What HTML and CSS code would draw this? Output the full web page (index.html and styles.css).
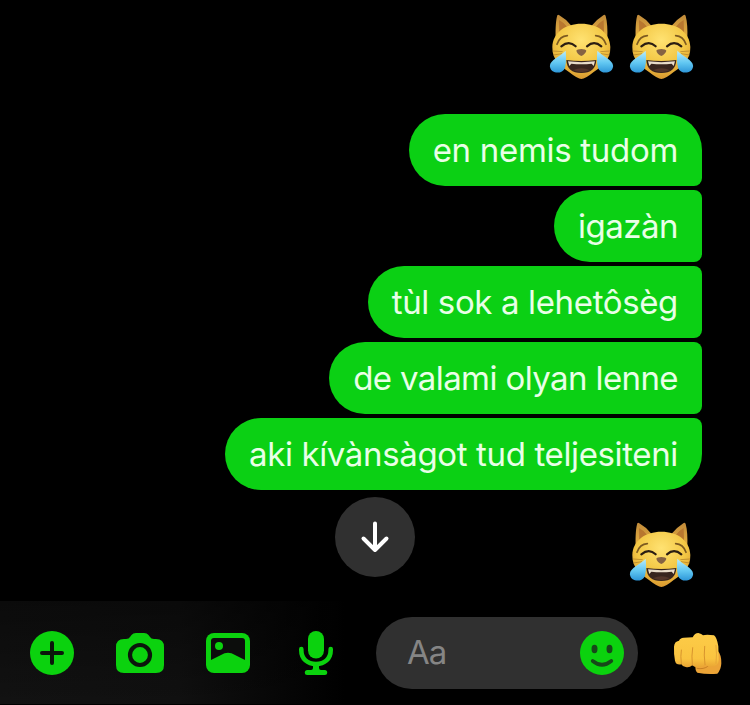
FILE: index.html
```
<!DOCTYPE html>
<html lang="hu">
<head>
<meta charset="utf-8">
<title>Chat</title>
<link rel="stylesheet" href="styles.css">
</head>
<body>
<svg class="defs" width="0" height="0" aria-hidden="true">
  <defs>
    <radialGradient id="fur" cx=".5" cy=".3" r=".7"><stop offset="0" stop-color="#ffe272"/><stop offset=".6" stop-color="#f3c744"/><stop offset="1" stop-color="#d9982f"/></radialGradient>
    <linearGradient id="ear" x1="0" y1="0" x2="0" y2="1"><stop offset="0" stop-color="#c08a3a"/><stop offset="1" stop-color="#e6b040"/></linearGradient>
    <linearGradient id="tear" x1="0" y1="0" x2="0" y2="1"><stop offset="0" stop-color="#b9ecfb"/><stop offset=".55" stop-color="#62c8f2"/><stop offset="1" stop-color="#2d96d8"/></linearGradient>
    <linearGradient id="hand" x1="0" y1="0" x2="0" y2="1"><stop offset="0" stop-color="#fdcc48"/><stop offset=".75" stop-color="#fac440"/><stop offset="1" stop-color="#e9a433"/></linearGradient>
    <symbol id="cat" viewBox="27 27 195 198">
      <path d="M47 98C46 69 48 43 52 31Q54 28 58 31Q79 43 94 62L155 62Q172 42 191 30Q195 28 197 33C202 51 203 75 202 98Z" fill="url(#ear)"/>
      <path d="M57 45Q72 53 81 65L58 84ZM191 45Q177 53 168 65L192 84Z" fill="#b8772f"/>
      <path d="M124 56C76 56 38 83 37 126C36 166 63 184 88 202Q113 222 124 222Q136 222 160 202C186 184 212 166 211 126C210 83 173 56 124 56Z" fill="url(#fur)"/>
      <path d="M39 138L68 140M40 150L66 146M210 138L181 140M209 150L183 146" fill="none" stroke="#a97a28" stroke-width="2"/>
      <path d="M51 118C56 103 66 93 82 92M198 118C193 103 183 93 167 92" fill="none" stroke="#7d5a20" stroke-width="5" stroke-linecap="round"/>
      <path d="M64 124Q87 105 107 124M141 124Q162 105 184 124" fill="none" stroke="#2b1d12" stroke-width="6.500" stroke-linecap="round"/>
      <path d="M109 137Q111 132 124 132Q137 132 139 137Q137 146 124 153Q111 147 109 137Z" fill="#866343"/>
      <path d="M79 165Q124 171 169 165Q167 204 124 204Q81 204 79 165Z" fill="#38251d"/>
      <path d="M84 169Q124 174 165 169L161 183L155 176Q124 179 94 176L88 183Z" fill="#e8dcc9"/>
      <path d="M99 196Q124 184 150 196Q124 207 99 196Z" fill="#523529"/>
      <path d="M77 137Q80 168 75 188C67 209 34 207 30 186C26 166 60 155 77 137ZM172 137Q169 168 174 188C182 209 215 207 219 186C223 166 189 155 172 137Z" fill="url(#tear)"/>
    </symbol>
  </defs>
</svg>
<main class="chat">
  <section class="thread">
    <div class="emoji-row"><svg class="cat" role="img" aria-label="😹"><use href="#cat"/></svg><svg class="cat" role="img" aria-label="😹"><use href="#cat"/></svg></div>
    <div class="messages">
      <p class="bubble first">en nemis tudom</p>
      <p class="bubble short">igazàn</p>
      <p class="bubble">tùl sok a lehetôsèg</p>
      <p class="bubble tight">de valami olyan lenne</p>
      <p class="bubble last">aki kívànsàgot tud teljesiteni</p>
    </div>
    <div class="emoji-row"><svg class="cat" role="img" aria-label="😹"><use href="#cat"/></svg></div>
    <button class="scroll-down" aria-label="↓"><svg width="80" height="80" viewBox="0 0 80 80"><path d="M40 26.500V53M28.500 41.500L40 53L51.500 41.500"/></svg></button>
  </section>
  <footer class="composer">
    <div class="actions">
      <svg width="44" height="44" viewBox="0 0 44 44"><circle cx="22" cy="22" r="22" fill="#0bd20e"/><path d="M22 12V32M12 22H32" stroke="#0b160b" stroke-width="4" stroke-linecap="round"/></svg>
      <svg width="48" height="40" viewBox="0 0 48 40"><path d="M8 6H10Q13 6 14 4L15.500 2Q17 0 20 0H28Q31 0 32.500 2L34 4Q35 6 38 6H40Q48 6 48 14V32Q48 40 40 40H8Q0 40 0 32V14Q0 6 8 6Z" fill="#0bd20e"/><circle cx="24" cy="22" r="10" fill="none" stroke="#0b160b" stroke-width="4.200"/></svg>
      <svg width="44" height="40" viewBox="0 0 44 40"><rect width="44" height="40" rx="8" fill="#0bd20e"/><path d="M8 5H36Q39 5 39 8V27L29 22Q22 17.500 15 22L5 27V8Q5 5 8 5Z" fill="#0c0d0c"/><circle cx="13" cy="13" r="4" fill="#0bd20e"/></svg>
      <svg width="34" height="44" viewBox="0 0 34 44"><rect x="9" width="16" height="27.500" rx="8" fill="#0bd20e"/><path d="M2.300 18V19C2.300 28 8.500 33 17 33S31.700 28 31.700 19V18" fill="none" stroke="#0bd20e" stroke-width="4.600" stroke-linecap="round"/><path d="M14 33H20V37Q20 39 22 39H12Q14 39 14 37Z" fill="#0bd20e"/><path d="M8.300 41.500H25.700" stroke="#0bd20e" stroke-width="5" stroke-linecap="round"/></svg>
    </div>
    <div class="field"><span class="placeholder">Aa</span>
      <svg width="44" height="44" viewBox="0 0 44 44"><circle cx="22" cy="22" r="22" fill="#0bd20e"/><ellipse cx="14.500" cy="18" rx="3" ry="4.200" fill="#174819"/><ellipse cx="29.500" cy="18" rx="3" ry="4.200" fill="#174819"/><path d="M12.700 30Q22 37.500 31.300 30" fill="none" stroke="#174819" stroke-width="3.700" stroke-linecap="round"/></svg>
    </div>
    <svg class="fist" viewBox="338 112 147 127" role="img" aria-label="👊">
      <path d="M405 207L470 165Q484 179 483 205Q482 225 471 236Q440 239 411 233Q404 228 405 207Z" fill="#eca437"/>
      <path d="M409 220Q430 224 444 213" fill="none" stroke="#c98023" stroke-width="3"/>
      <path d="M341 155Q342 139 356 137Q359 129 370 128L397 127Q403 114 414 114Q424 116 428 121Q438 117 461 121Q470 128 474 154L475 196Q474 214 456 215Q442 217 434 209Q425 217 412 217Q401 217 396 211Q387 219 376 216Q366 215 363 208Q347 211 344 197Q340 176 341 155Z" fill="url(#hand)"/>
      <path d="M363 206Q360 184 363 165M396 210Q393 183 397 158M434 209Q430 179 433 154" fill="none" stroke="#d8942d" stroke-width="3" stroke-linecap="round"/>
      <path d="M467 151Q470 177 467 205" fill="none" stroke="#e2a237" stroke-width="2.500" stroke-linecap="round"/>
    </svg>
  </footer>
</main>
</body>
</html>
```
FILE: styles.css
```
* { box-sizing: border-box; }
body { margin: 0; background: #000; font-family: Inter, "Liberation Sans", sans-serif; }
.defs { position: absolute; }
.chat { width: 750px; height: 705px; display: flex; flex-direction: column; overflow: hidden; background: #000; }
.thread { position: relative; height: 601px; padding: 14px 56px 0 0; }
.emoji-row { display: flex; justify-content: flex-end; gap: 15px; height: 66px; }
.cat { width: 65px; height: 66px; }
.messages { display: flex; flex-direction: column; align-items: flex-end; gap: 4px; margin: 34px -8px 32px 0; }
.bubble { margin: 0; height: 72px; padding: 0 24px; border-radius: 36px 8px 8px 36px; background: #0bd014; color: #e9ffe7; font-size: 33px; line-height: 73px; letter-spacing: -.36px; white-space: nowrap; }
.first { border-top-right-radius: 36px; letter-spacing: -.3px; }
.short { letter-spacing: -.5px; }
.tight { letter-spacing: -.6px; }
.last { border-bottom-right-radius: 36px; }
.scroll-down { position: absolute; left: 335px; top: 497px; width: 80px; height: 80px; padding: 0; border: 0; border-radius: 50%; background: #303030; }
.scroll-down svg { display: block; fill: none; stroke: #fff; stroke-width: 4; stroke-linecap: round; stroke-linejoin: round; }
.composer { height: 103px; display: flex; align-items: center; padding: 1px 28px 0 30px; background: linear-gradient(to bottom, rgba(0,0,0,.4), transparent), linear-gradient(to right, #121212 0, #101010 180px, #000 345px); }
.composer svg { flex: none; }
.actions { display: flex; align-items: center; gap: 42px; width: 346px; flex: none; }
.actions svg:last-child { margin-left: 7px; }
.field { flex: none; width: 262px; height: 72px; display: flex; align-items: center; justify-content: space-between; padding: 0 14px 0 31px; border-radius: 36px; background: #303030; color: #858585; }
.placeholder { font-size: 33px; line-height: 40px; padding-bottom: 2px; letter-spacing: -1px; }
.fist { width: 49px; height: 43px; margin-left: 35px; }
```
